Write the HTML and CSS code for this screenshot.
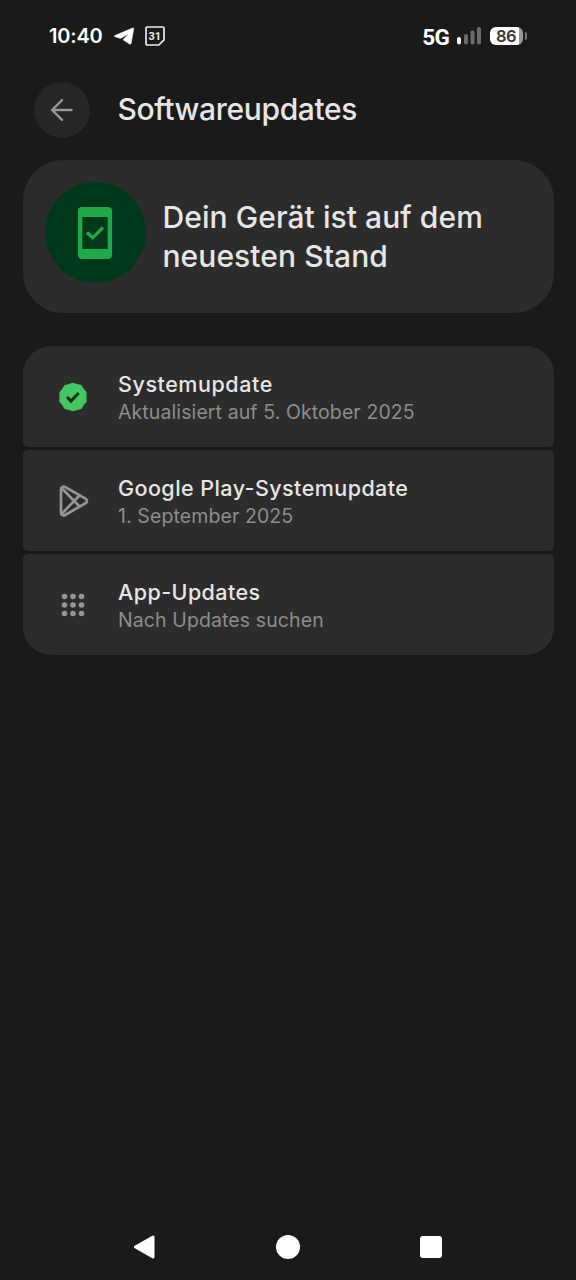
FILE: index.html
```html
<!DOCTYPE html>
<html lang="de">
<head>
<meta charset="utf-8">
<title>Softwareupdates</title>
<link rel="stylesheet" href="styles.css">
</head>
<body>
<div class="screen">
  <header class="status">
    <div class="status-left">
      <span class="clock">10:40</span>
      <svg class="telegram" width="21" height="18" viewBox="0 0 21 18"><path d="M1 8.500 18.500 1c.8-.3 1.300.2 1.200 1l-2.500 14.200c-.2 1-1 1.300-1.800.7L9 12.800l5.500-6L6.500 11.400 1 9.700C.3 9.400.3 8.800 1 8.500Z" fill="#fff" stroke="#fff" stroke-width=".5"/></svg>
      <svg class="calendar" width="20" height="20" viewBox="0 0 20 20"><path d="M2.200 1h15.600c.7 0 1.200.5 1.200 1.200v11.600L13.800 19H2.200C1.500 19 1 18.500 1 17.800V2.200C1 1.500 1.500 1 2.200 1Z" fill="none" stroke="#eee" stroke-width="1.700"/><text class="calendar-day" x="9.800" y="13.700" text-anchor="middle">31</text></svg>
    </div>
    <div class="status-right">
      <span class="network">5G</span>
      <svg class="signal" width="25" height="18" viewBox="0 0 25 18"><rect x="0" y="10" width="4" height="7.500" rx="2" fill="#fff"/><g fill="#6b6b6b"><rect x="7" y="7" width="4" height="10.500" rx="1.800"/><rect x="13.500" y="3.500" width="4" height="14" rx="1.800"/><rect x="20" y="0" width="4" height="17.500" rx="1.800"/></g></svg>
      <div class="battery"><span class="battery-level">86</span></div>
      <span class="battery-tip"></span>
    </div>
  </header>

  <div class="toolbar">
    <button class="back" aria-label="Zurück"><svg width="24" height="24" viewBox="0 0 24 24" fill="none" stroke="#959595" stroke-width="2.400" stroke-linecap="round" stroke-linejoin="miter"><path d="M21.500 12H3M12 2.200 2.200 12 12 21.800"/></svg></button>
    <h1 class="title">Softwareupdates</h1>
  </div>

  <main class="content">
    <section class="hero">
      <div class="hero-icon"><svg width="34" height="52" viewBox="0 0 34 52"><path d="M4 0h26a4 4 0 0 1 4 4v44a4 4 0 0 1-4 4H4a4 4 0 0 1-4-4V4a4 4 0 0 1 4-4ZM4.300 10v32h25.400V10Z" fill="#20a94b" fill-rule="evenodd"/><path d="m9 25.500 5.700 5.300L25 20.500" fill="none" stroke="#20a94b" stroke-width="3.300"/></svg></div>
      <p class="hero-text">Dein Gerät ist auf dem<br>neuesten Stand</p>
    </section>
    <section class="list">
      <div class="row">
        <div class="row-icon badge"><svg width="28" height="30" viewBox="-14 -15 28 30"><path d="M0-13.500 4-12.200 8-11.200 10.300-7.600 13-4.200 12.700 0 13 4.200 10.300 7.600 8 11.200 4 12.200 0 13.500-4 12.200-8 11.200-10.300 7.600-13 4.200-12.700 0-13-4.200-10.300-7.600-8-11.200-4-12.200Z" fill="#44c663" stroke="#44c663" stroke-width="1.500" stroke-linejoin="round"/><path d="m-6 0 4 4L5.700-4" fill="none" stroke="#102d18" stroke-width="3"/></svg></div>
        <div class="row-text"><span class="row-title wide">Systemupdate</span><span class="row-sub">Aktualisiert auf 5. Oktober 2025</span></div>
      </div>
      <div class="row">
        <div class="row-icon play"><svg width="30" height="32" viewBox="0 0 30 32" fill="none" stroke="#959595" stroke-width="2.700" stroke-linejoin="round" stroke-linecap="round"><path d="M2 4.200C2 2 4 .9 6 2l20.500 11.600c2 1.100 2 3.600 0 4.700L6 30c-2 1.100-4 0-4-2.200Z"/><path d="M3 3.500 20.500 21.500M3 28.500 20.500 10.500"/></svg></div>
        <div class="row-text"><span class="row-title">Google Play-Systemupdate</span><span class="row-sub">1. September 2025</span></div>
      </div>
      <div class="row">
        <div class="row-icon"><svg width="24" height="24" viewBox="0 0 24 24" fill="#959595"><circle cx="3.500" cy="3.500" r="2.800"/><circle cx="12" cy="3.500" r="2.800"/><circle cx="20.500" cy="3.500" r="2.800"/><circle cx="3.500" cy="12" r="2.800"/><circle cx="12" cy="12" r="2.800"/><circle cx="20.500" cy="12" r="2.800"/><circle cx="3.500" cy="20.500" r="2.800"/><circle cx="12" cy="20.500" r="2.800"/><circle cx="20.500" cy="20.500" r="2.800"/></svg></div>
        <div class="row-text"><span class="row-title">App-Updates</span><span class="row-sub">Nach Updates suchen</span></div>
      </div>
    </section>
  </main>

  <nav class="nav">
    <svg width="22" height="24" viewBox="0 0 22 24"><path d="M2.500 12 20 2v20Z" fill="#fff" stroke="#fff" stroke-width="3" stroke-linejoin="round"/></svg>
    <svg width="24" height="24" viewBox="0 0 24 24"><circle cx="12" cy="12" r="12" fill="#fff"/></svg>
    <svg width="22" height="22" viewBox="0 0 22 22"><rect width="22" height="22" rx="3" fill="#fff"/></svg>
  </nav>
</div>
</body>
</html>
```
FILE: styles.css
```css
* { box-sizing: border-box; }
body { margin: 0; background: #1a1a1a; font-family: Inter, "Open Sans", sans-serif; color: #e6e6e6; }
.screen { width: 576px; height: 1280px; display: flex; flex-direction: column; overflow: hidden; }
.status { height: 72px; padding: 0 49px 0 49px; display: flex; justify-content: space-between; align-items: center; color: #fff; }
.status-left, .status-right { display: flex; align-items: center; }
.clock { font-size: 20px; font-weight: 600; line-height: 24px; letter-spacing: -0.2px; }
.telegram { margin-left: 11px; }
.calendar { margin-left: 10px; }
.calendar-day { font-family: Roboto, sans-serif; font-size: 11px; font-weight: 700; fill: #eee; }
.network { font-family: Roboto, sans-serif; font-size: 22.5px; font-weight: 700; line-height: 26px; letter-spacing: -0.8px; padding-top: 1px; }
.signal { margin-left: 8px; }
.battery { width: 33px; height: 18px; margin-left: 8px; border-radius: 6px; background: linear-gradient(to right, #fff 29px, #999 29px); }
.battery-level { display: block; padding-left: 6px; font-size: 16.5px; line-height: 18px; font-weight: 600; color: #3a3a3a; letter-spacing: -0.5px; }
.battery-tip { width: 2px; height: 8px; margin-left: 2px; background: #777; border-radius: 0 2px 2px 0; }
.toolbar { height: 75px; padding: 1px 0 0 33.5px; display: flex; align-items: center; gap: 28px; }
.back { width: 56px; height: 56px; padding: 0; border: 0; border-radius: 50%; background: #272727; display: grid; place-items: center; }
.title { margin: -2px 0 0; font-size: 30px; line-height: 40px; font-weight: 450; letter-spacing: -0.35px; }
.content { flex: 1; padding: 13px 22.5px 0; }
.hero { height: 152.5px; padding-left: 22px; border-radius: 40px; background: #2c2c2c; display: flex; gap: 17px; }
.hero-icon { width: 101px; height: 101px; margin-top: 22px; border-radius: 50%; background: #00381c; display: grid; place-items: center; }
.hero-text { margin: 38px 0 0; font-size: 30px; line-height: 39px; font-weight: 450; letter-spacing: 0.07px; white-space: nowrap; }
.list { margin-top: 33.5px; display: grid; gap: 3px; }
.row { height: 101px; border-radius: 5px; background: #2c2c2c; display: flex; align-items: center; }
.row:first-child { border-radius: 28px 28px 5px 5px; }
.row:last-child { border-radius: 5px 5px 28px 28px; }
.row-icon { width: 95.5px; display: flex; justify-content: center; padding-left: 5px; }
.row-icon.play { padding-left: 8px; }
.row-text { padding-top: 3px; display: flex; flex-direction: column; align-items: flex-start; white-space: nowrap; }
.row-title { font-size: 21.5px; line-height: 28px; font-weight: 500; letter-spacing: 0.44px; }
.row-title.wide { letter-spacing: 0.56px; }
.row-sub { font-size: 19.5px; line-height: 28px; color: #8d8d8d; letter-spacing: 0.1px; }
.nav { height: 67px; padding: 0 134px 0 133px; display: flex; align-items: center; justify-content: space-between; }
```
